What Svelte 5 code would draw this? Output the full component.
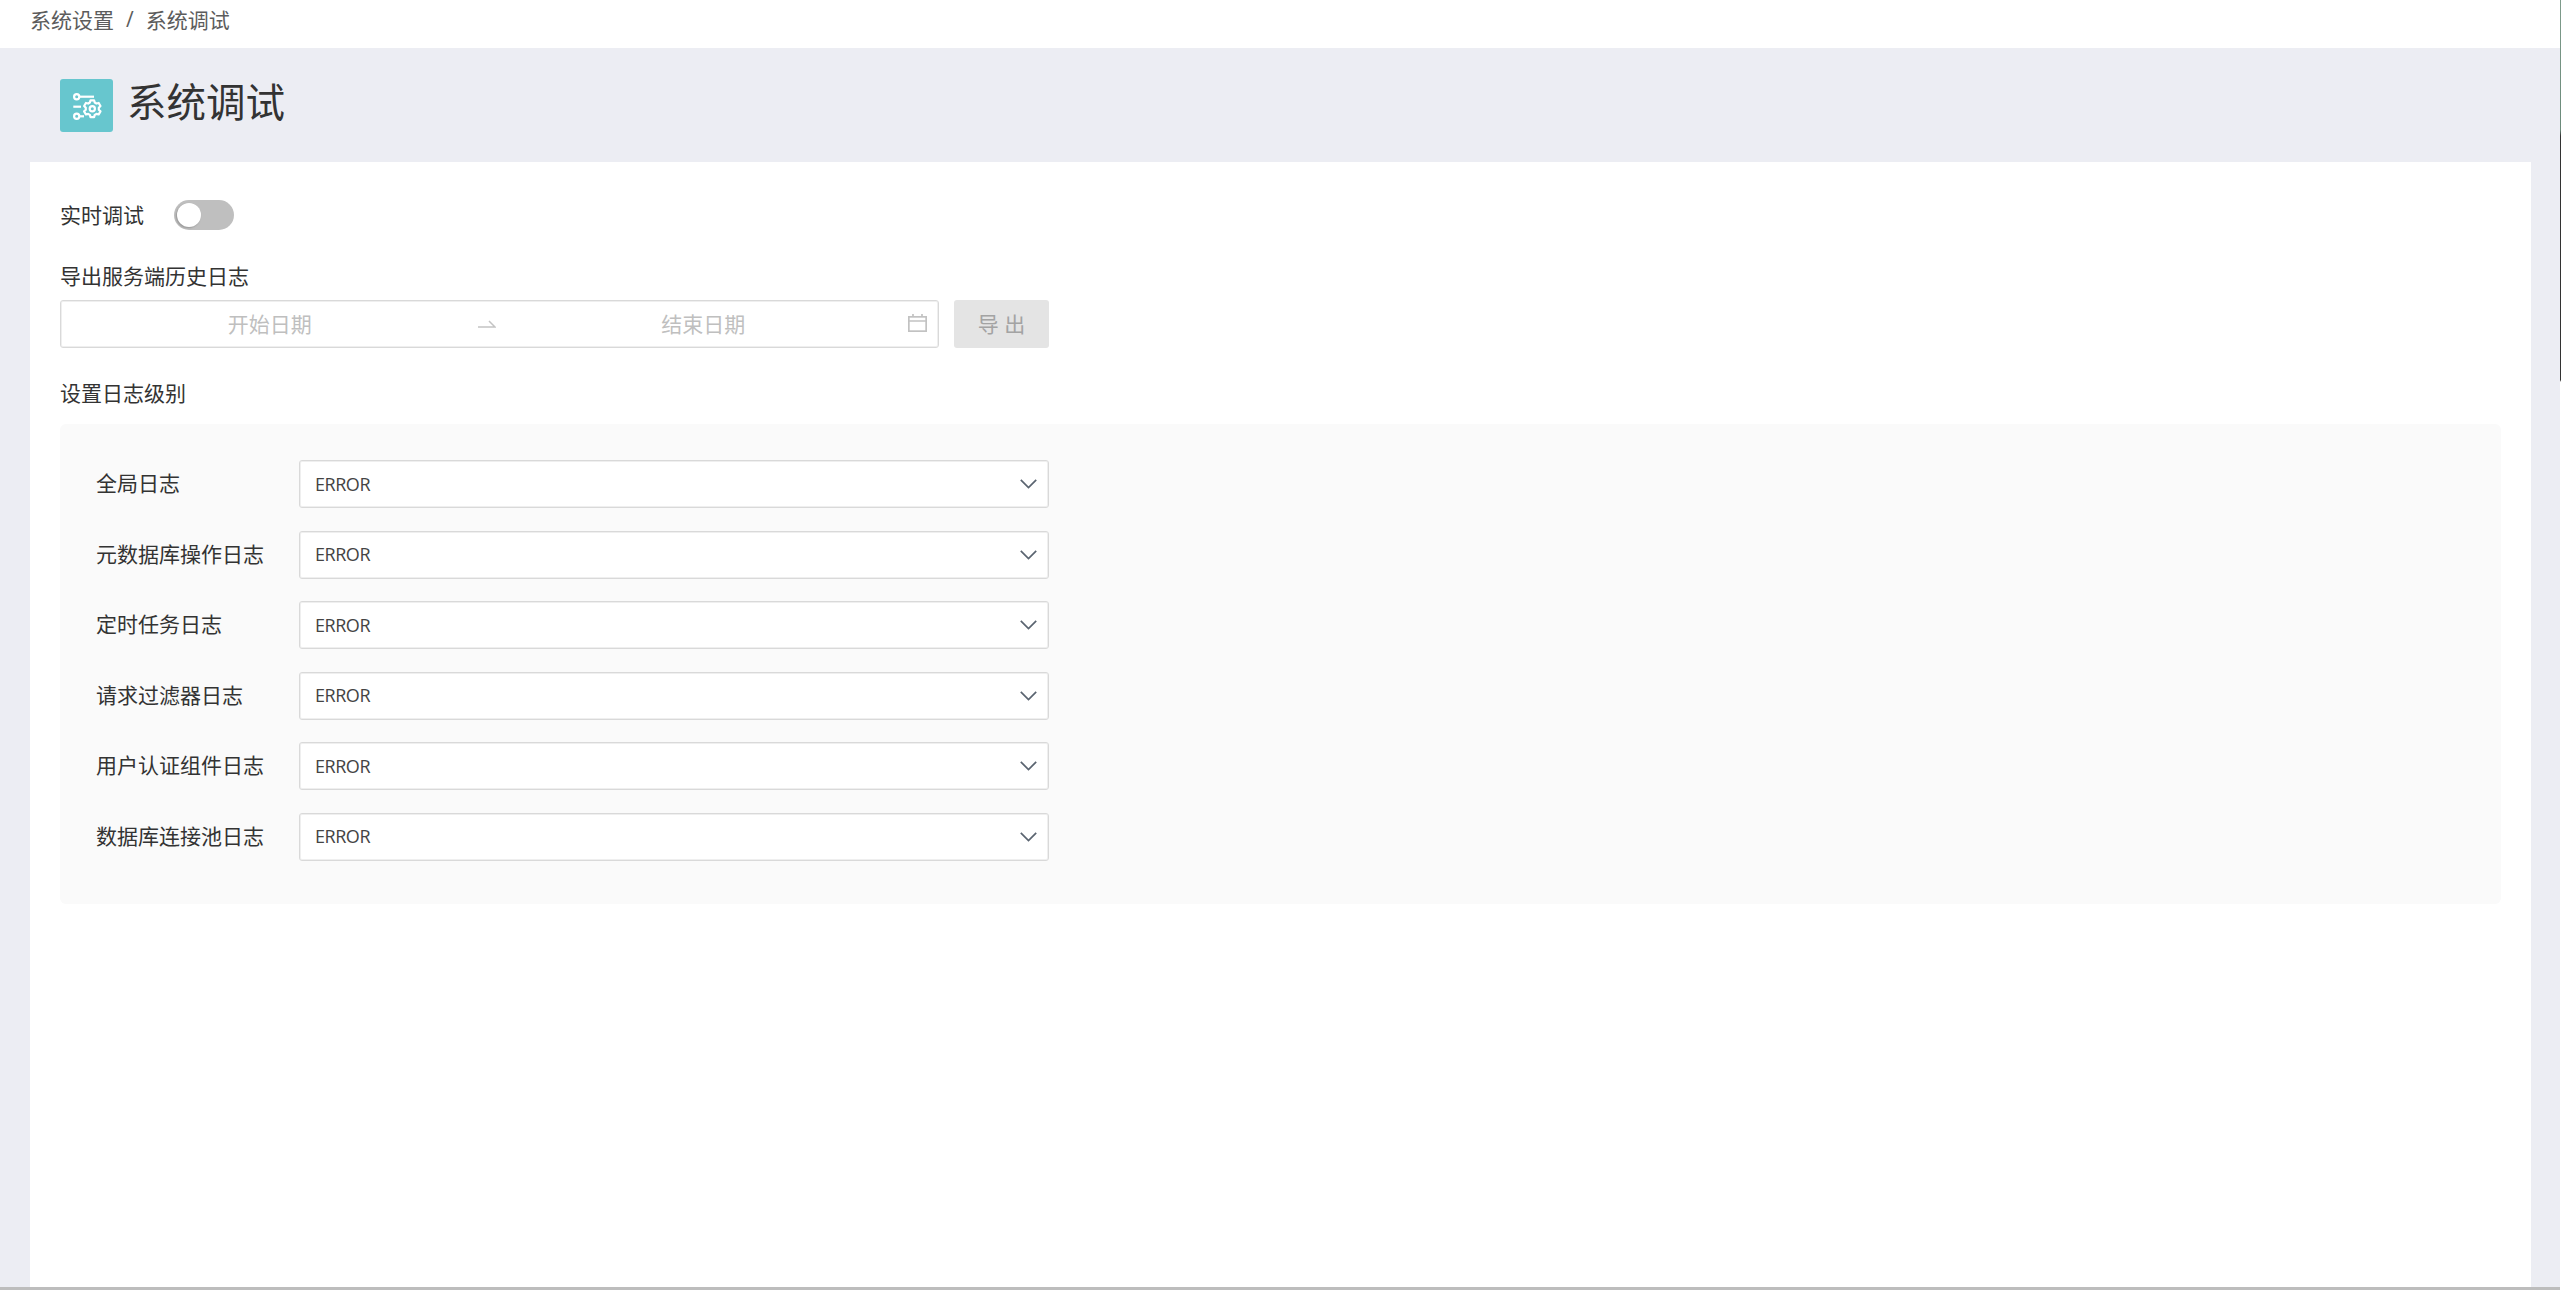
<script>
  const rows = ['全局日志', '元数据库操作日志', '定时任务日志', '请求过滤器日志', '用户认证组件日志', '数据库连接池日志'];

  function gearPath(cx, cy, ro, ri, teeth) {
    const pts = [];
    const step = (Math.PI * 2) / teeth;
    for (let i = 0; i < teeth; i++) {
      const a = i * step - Math.PI / 2;
      const w = step * 0.2;
      const v = step * 0.3;
      [[a - w, ro], [a + w, ro], [a + v * 1.2, ri], [a + step - v * 1.2, ri]].forEach(([t, r]) => {
        pts.push(`${(cx + r * Math.cos(t)).toFixed(2)} ${(cy + r * Math.sin(t)).toFixed(2)}`);
      });
    }
    return 'M' + pts.join('L') + 'Z';
  }
  const gear = gearPath(32.3, 29.7, 8.6, 6.6, 6);
</script>

<div class="app">
  <div class="page">
    <nav class="crumbs">
      <span>系统设置</span><span class="sep">/</span><span>系统调试</span>
    </nav>

    <header class="head">
      <span class="logo">
        <svg viewBox="0 0 53 53" width="53" height="53" fill="none" stroke="#fff" stroke-width="2.2">
          <circle cx="16.7" cy="17.7" r="2.6" />
          <path d="M19.5 17.7H34" />
          <path d="M13.3 27.7H21" />
          <circle cx="16.7" cy="37.3" r="2.6" />
          <path d="M19.5 37.3H24" />
          <path d={gear} stroke-linejoin="round" />
          <circle cx="32.3" cy="29.7" r="2.6" />
        </svg>
      </span>
      <h1>系统调试</h1>
    </header>

    <main class="card">
      <div class="realtime">
        <span class="text">实时调试</span>
        <span class="switch"><i></i></span>
      </div>

      <div class="label export-label">导出服务端历史日志</div>
      <div class="export">
        <div class="range">
          <span class="ph">开始日期</span>
          <svg class="arrow" viewBox="0 0 18 10" width="18" height="10" fill="none" stroke="#c4c4c4" stroke-width="1.5">
            <path d="M0 8H17L11 2" />
          </svg>
          <span class="ph">结束日期</span>
          <svg class="cal" viewBox="0 0 19 18" width="19" height="18" fill="none" stroke="#c2c2c2" stroke-width="1.7">
            <rect x="0.85" y="2.85" width="17.3" height="14.3" />
            <path d="M0.85 7H18.15M5 0V3M14 0V3" />
          </svg>
        </div>
        <button class="btn" type="button" disabled>导 出</button>
      </div>

      <div class="label level-label">设置日志级别</div>
      <section class="panel">
        {#each rows as row}
          <div class="row">
            <span class="text name">{row}</span>
            <div class="select">
              <span class="value">ERROR</span>
              <svg viewBox="0 0 17 10" width="17" height="10" fill="none" stroke="#5a6470" stroke-width="1.7">
                <path d="M0.8 0.8L8.5 8.6L16.2 0.8" />
              </svg>
            </div>
          </div>
        {/each}
      </section>
    </main>
  </div>
  <div class="edge"></div>
</div>

<style>
  :global(body) {
    margin: 0;
    background: #fff;
  }

  .app {
    display: flex;
    width: 2561px;
    height: 1290px;
    overflow: hidden;
    font-family: "Open Sans", "Noto Sans CJK SC", sans-serif;
    font-size: 21px;
    color: #333;
  }

  .page {
    flex: 1;
    min-width: 0;
    display: flex;
    flex-direction: column;
    background: #ecedf3;
    box-shadow: inset 0 -3px 0 #bdbdbd;
  }

  .edge {
    width: 1px;
    background: linear-gradient(#7f9c8c 0, #6b8a7a 130px, #333 136px, #333 380px, #fff 382px);
  }

  .crumbs {
    height: 48px;
    flex: none;
    box-sizing: border-box;
    padding: 0 0 10px 30px;
    background: #fff;
    display: flex;
    align-items: center;
    color: #5c5c5c;
  }

  .sep {
    margin: 0 12px;
  }

  .head {
    height: 114px;
    flex: none;
    box-sizing: border-box;
    padding-left: 60px;
    display: flex;
    align-items: center;
    gap: 14px;
  }

  .logo {
    width: 53px;
    height: 53px;
    border-radius: 3px;
    background: #67c6ce;
    display: flex;
  }

  h1 {
    margin: 0 0 6px;
    font-size: 39.5px;
    font-weight: 400;
    color: #333;
    line-height: 54px;
  }

  .card {
    flex: 1;
    margin: 0 29px 3px 30px;
    padding: 38px 30px 0;
    background: #fff;
  }

  .realtime {
    display: flex;
    align-items: center;
    height: 30px;
    gap: 30px;
  }

  .text,
  .label {
    line-height: 30px;
  }

  .switch {
    width: 60px;
    height: 30px;
    border-radius: 15px;
    background: #bfbfbf;
    display: flex;
    align-items: center;
    padding-left: 3px;
    box-sizing: border-box;
  }

  .switch i {
    width: 24px;
    height: 24px;
    border-radius: 50%;
    background: #fff;
    box-shadow: -1px 1px 2px rgba(0, 0, 0, 0.22);
  }

  .export-label {
    margin-top: 31px;
  }

  .export {
    display: flex;
    gap: 15px;
    margin-top: 9px;
  }

  .range {
    position: relative;
    width: 879px;
    height: 48px;
    box-sizing: border-box;
    border: 1px solid #d9d9d9;
    box-shadow: inset 0 0 0 1px #efefef;
    border-radius: 3px;
    display: flex;
    align-items: center;
    padding: 0 27px 0 1px;
    background: #fff;
  }

  .ph {
    flex: 1;
    text-align: center;
    color: #bfbfbf;
    padding-bottom: 2px;
  }

  .arrow {
    flex: none;
  }

  .cal {
    position: absolute;
    right: 11px;
    top: 13px;
  }

  .btn {
    width: 95px;
    height: 48px;
    border: 0;
    border-radius: 3px;
    padding: 0 0 2px;
    background: #e4e4e4;
    color: #a3a3a3;
    font: inherit;
  }

  .level-label {
    margin-top: 30px;
  }

  .panel {
    margin-top: 16px;
    padding: 36px 36px 43px;
    background: #fafafa;
    border-radius: 6px;
    display: flex;
    flex-direction: column;
    gap: 22.6px;
  }

  .row {
    display: flex;
    align-items: center;
  }

  .name {
    width: 203px;
    flex: none;
    padding-bottom: 2px;
  }

  .select {
    width: 750px;
    height: 48px;
    box-sizing: border-box;
    border: 1px solid #d9d9d9;
    box-shadow: inset 0 0 0 1px #efefef;
    border-radius: 3px;
    background: #fff;
    display: flex;
    align-items: center;
    justify-content: space-between;
    padding: 0 11px 0 15px;
    font-size: 18px;
    color: #444;
  }

  .value {
    letter-spacing: -0.45px;
    padding-bottom: 1px;
  }
</style>
